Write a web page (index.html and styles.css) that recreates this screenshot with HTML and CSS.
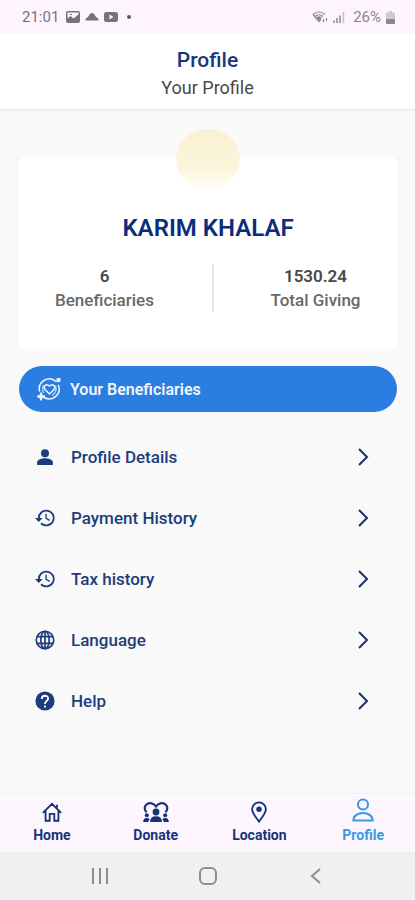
FILE: index.html
```html
<!DOCTYPE html>
<html lang="en">
<head>
    <meta charset="UTF-8">
    <meta name="viewport" content="width=device-width, initial-scale=1.0">
    <title>Profile</title>
    <link rel="stylesheet" href="styles.css">
</head>
<body>
    <div class="status-bar">
        <div class="status-group">
            <span>21:01</span>
            <svg width="14" height="12" viewBox="0 0 14 12"><path fill="currentColor" fill-rule="evenodd" d="M2 0h10a2 2 0 0 1 2 2v8a2 2 0 0 1-2 2H2a2 2 0 0 1-2-2V2a2 2 0 0 1 2-2zM1.500 1.500v6l3-2.500 3 2.500 5-4v-2zM4 3h2v1H4z"/></svg>
            <svg width="14" height="12" viewBox="0 0 14 12"><path fill="currentColor" d="M1.500 9.500C0 9.500 0 7 2.500 6.500L5 3Q7 1 9 3l2.500 3.500C14 7 14 9.500 12.500 9.500z"/></svg>
            <svg width="14" height="12" viewBox="0 0 14 12"><path fill="currentColor" fill-rule="evenodd" d="M2.500 1h9A2.500 2.500 0 0 1 14 3.500v5a2.500 2.500 0 0 1-2.500 2.500h-9A2.500 2.500 0 0 1 0 8.500v-5A2.500 2.500 0 0 1 2.500 1zM5.500 3.500v5L9.500 6z"/></svg>
            <span class="dot"></span>
        </div>
        <div class="status-group status-right">
            <svg width="16" height="12" viewBox="0 0 16 12" fill="none" stroke="currentColor" stroke-width="1.200"><path d="M1 3.500Q7 -1.500 13 3.500M3 5.500Q7 2 11 5.500M1 3.500l6 7 2-2"/><path fill="currentColor" d="M5 6.500Q7 5 9 6.500L7 9z"/><path d="M11.500 8v3M14.500 7v3"/></svg>
            <svg width="12" height="12" viewBox="0 0 12 12" fill="none" stroke="currentColor" stroke-width="1.500"><path d="M1 12V9.500M4 12V7M7 12V4.500"/><path opacity=".5" d="M10.500 12V1"/></svg>
            <span class="battery-text">26%</span>
            <svg width="9" height="13" viewBox="0 0 9 13" fill="currentColor"><path opacity=".4" d="M3 0h3v1.500h2q1 0 1 1V8H0V2.500q0-1 1-1h2z"/><path d="M0 8h9v4q0 1-1 1H1q-1 0-1-1z"/></svg>
        </div>
    </div>

    <header>
        <h1>Profile</h1>
        <p>Your Profile</p>
    </header>

    <main>
        <section class="card">
            <div class="avatar"></div>
            <h2>KARIM KHALAF</h2>
            <div class="stats">
                <div class="stat">
                    <strong>6</strong>
                    <span>Beneficiaries</span>
                </div>
                <div class="stat">
                    <strong>1530.24</strong>
                    <span>Total Giving</span>
                </div>
            </div>
        </section>

        <button type="button" class="beneficiaries">
            <svg width="24" height="24" viewBox="0 0 24 24" fill="none" stroke="currentColor" stroke-width="1.500" stroke-linecap="round" stroke-linejoin="round"><path d="M19 4.500A10 10 0 0 0 2.500 14M7 20.500a10 10 0 0 0 14.500-12"/><path d="M12.500 17l-4.500-4.500C5.500 9 9.500 6 12.500 9c3-3 7 0 4.500 3.500z"/><path d="M6.500 15.500A7 7 0 0 1 6 9M18.500 9a7 7 0 0 1-3 9" opacity=".6"/><path fill="currentColor" d="M4 16l1 2.500 2.500 1L5 20.500 4 23l-1-2.500-2.500-1 2.500-1z"/><circle cx="21.500" cy="3" r="1.500" fill="currentColor"/></svg>
            Your Beneficiaries
        </button>

        <nav class="menu">
            <a href="#details">
                <svg class="icon" viewBox="0 0 24 24" fill="currentColor"><circle cx="12" cy="7.500" r="4.800"/><path d="M2.500 21.500v-3c0-3.500 6-5 9.500-5s9.500 1.500 9.500 5v3z"/></svg>
                <span>Profile Details</span>
                <svg class="chevron" viewBox="0 0 12 20"><path d="M2 2l8 8-8 8"/></svg>
            </a>
            <a href="#payments">
                <svg class="icon" viewBox="0 0 24 24" fill="currentColor"><path d="M13.500 2A10 10 0 0 0 3.500 12H0l4.600 4.700L9.200 12H5.800a7.800 7.800 0 1 1 2.300 5.500l-1.600 1.600A10 10 0 1 0 13.500 2zM12.500 7v5.800l4.700 2.800.8-1.400-3.900-2.300V7z"/></svg>
                <span>Payment History</span>
                <svg class="chevron" viewBox="0 0 12 20"><path d="M2 2l8 8-8 8"/></svg>
            </a>
            <a href="#tax">
                <svg class="icon" viewBox="0 0 24 24" fill="currentColor"><path d="M13.500 2A10 10 0 0 0 3.500 12H0l4.600 4.700L9.200 12H5.800a7.800 7.800 0 1 1 2.300 5.500l-1.600 1.600A10 10 0 1 0 13.500 2zM12.500 7v5.800l4.700 2.800.8-1.400-3.900-2.300V7z"/></svg>
                <span>Tax history</span>
                <svg class="chevron" viewBox="0 0 12 20"><path d="M2 2l8 8-8 8"/></svg>
            </a>
            <a href="#language">
                <svg class="icon" viewBox="0 0 24 24" fill="none" stroke="currentColor" stroke-width="2"><circle cx="12" cy="12" r="10.500"/><ellipse cx="12" cy="12" rx="5" ry="10.500"/><path d="M2.500 8h19M2.500 16h19M12 1.500v21"/></svg>
                <span>Language</span>
                <svg class="chevron" viewBox="0 0 12 20"><path d="M2 2l8 8-8 8"/></svg>
            </a>
            <a href="#help">
                <svg class="icon" viewBox="0 0 24 24"><circle cx="12" cy="12" r="11.500" fill="currentColor"/><path fill="none" stroke="#fff" stroke-width="2.200" d="M8.200 9.500c0-5 7.600-5 7.600-.5 0 2.800-3.800 3-3.800 6.500M12 17.300v2.400"/></svg>
                <span>Help</span>
                <svg class="chevron" viewBox="0 0 12 20"><path d="M2 2l8 8-8 8"/></svg>
            </a>
        </nav>
    </main>

    <nav class="tabs">
        <a href="#home">
            <svg viewBox="0 0 24 24" fill="none" stroke="currentColor" stroke-width="2"><path d="M2 13L12 3l10 10M5 11v10.500h4.500V14h5v7.500H19V11M17.500 7V4"/></svg>
            Home
        </a>
        <a href="#donate">
            <svg class="wide" viewBox="0 0 28 24" fill="currentColor"><path fill="none" stroke="currentColor" stroke-width="2.400" d="M3.500 12.500C-1 6 4 1.500 9 2.500q3 .5 5 3.500 2-3 5-3.500c5-1 10 3.500 5.500 10"/><circle cx="14" cy="12" r="3.700"/><path d="M7.500 23q0-6.500 6.500-6.500t6.500 6.500z"/><circle cx="4" cy="15.500" r="2.200"/><circle cx="24" cy="15.500" r="2.200"/><path d="M0 23Q0 18.500 4 18.500q2 0 3 1L5.500 23zM28 23q0-4.500-4-4.500-2 0-3 1l1.500 3.500z"/></svg>
            Donate
        </a>
        <a href="#location">
            <svg viewBox="0 0 24 24" fill="none" stroke="currentColor" stroke-width="2"><path d="M12 22.500C9 18 4.500 13.500 4.500 9a7.500 7.500 0 0 1 15 0c0 4.500-4.500 9-7.500 13.500z"/><circle cx="12" cy="9" r="3" fill="currentColor" stroke="none"/></svg>
            Location
        </a>
        <a href="#profile" class="active">
            <svg viewBox="0 0 24 26" fill="none" stroke="currentColor" stroke-width="2.200"><circle cx="12" cy="7" r="5.500"/><path d="M1.500 24.500c0-11 21-11 21 0z"/></svg>
            Profile
        </a>
    </nav>

    <div class="system-bar">
        <button type="button" aria-label="Recent apps"><svg width="18" height="18" viewBox="0 0 18 18"><path d="M2 1v16M9 1v16M16 1v16"/></svg></button>
        <button type="button" aria-label="Home screen"><svg width="18" height="18" viewBox="0 0 18 18"><rect x="1" y="1" width="16" height="16" rx="5"/></svg></button>
        <button type="button" aria-label="Back"><svg width="18" height="18" viewBox="0 0 18 18"><path d="M13 2L5 9l8 7"/></svg></button>
    </div>
</body>
</html>
```
FILE: styles.css
```css
* {
    box-sizing: border-box;
}
body {
    font-family: Roboto, Arial, sans-serif;
    margin: 0;
    min-height: 100vh;
    display: flex;
    flex-direction: column;
    background-color: #f9f9f9;
    color: #484848;
}
h1, h2, p {
    margin: 0;
}
a {
    text-decoration: none;
}
button {
    border: none;
    font-family: inherit;
}
.status-bar {
    display: flex;
    justify-content: space-between;
    align-items: center;
    height: 34px;
    padding: 0 20px 0 22px;
    background-color: #fef4fe;
    color: #77727a;
    font-size: 15px;
}
.status-group {
    display: flex;
    align-items: center;
    gap: 5px;
}
.status-group span:first-child {
    margin-right: 2px;
}
.status-right {
    color: #8c878e;
}
.battery-text {
    margin-left: 3px;
}
.dot {
    width: 4px;
    height: 4px;
    margin-left: 4px;
    border-radius: 50%;
    background-color: #5c585e;
}
header {
    padding: 12px 0 7px;
    background-color: white;
    border-bottom: 2px solid #eee;
    text-align: center;
}
h1 {
    color: #17387f;
    font-size: 21px;
    font-weight: 500;
    line-height: 28px;
}
header p {
    font-size: 18px;
    line-height: 28px;
}
main {
    flex: 1;
    padding: 45px 18px 0 19px;
}
.card {
    display: flex;
    flex-direction: column;
    align-items: center;
    padding-bottom: 37px;
    background-color: white;
    border-radius: 8px;
}
.avatar {
    width: 64px;
    height: 60px;
    margin-top: -27px;
    border-radius: 50%;
    background: linear-gradient(#fbf2d4 20%, #fcf5dc 65%, #fffdf5);
}
h2 {
    margin-top: 23px;
    color: #0b2e7c;
    font-size: 24px;
    font-weight: 600;
    line-height: 32px;
}
.stats {
    display: grid;
    grid-template-columns: 1fr 1fr;
    width: 100%;
    margin-top: 20px;
    padding-left: 8px;
}
.stat {
    display: flex;
    flex-direction: column;
    align-items: center;
    padding-right: 30px;
    font-size: 17px;
    font-weight: 500;
    line-height: 24px;
}
.stat strong {
    font-weight: 600;
}
.stat span {
    color: #686868;
}
.stat + .stat {
    padding-left: 20px;
    padding-right: 0;
    border-left: 2px solid #e2e2e2;
}
.beneficiaries {
    display: flex;
    align-items: center;
    gap: 9px;
    width: 100%;
    height: 46px;
    margin-top: 17px;
    padding: 0 18px;
    border-radius: 23px;
    background-color: #2a7de1;
    color: #f0f6ff;
    font-size: 16px;
    font-weight: 600;
}
.menu {
    margin-top: 14px;
}
.menu a {
    display: flex;
    align-items: center;
    height: 61px;
    padding: 0 28px 0 16px;
    color: #1b3d7b;
    font-size: 17px;
    font-weight: 500;
}
.menu span {
    flex: 1;
    margin-left: 16px;
}
.icon {
    width: 20px;
    height: 20px;
}
.chevron {
    width: 12px;
    height: 20px;
    fill: none;
    stroke: #1b3268;
    stroke-width: 2;
}
.tabs {
    display: grid;
    grid-template-columns: repeat(4, 1fr);
    height: 59px;
    background-color: #fef6fe;
    border-top: 1px solid #f3edf3;
}
.tabs a {
    display: flex;
    flex-direction: column;
    align-items: center;
    justify-content: flex-end;
    gap: 2px;
    padding-bottom: 7px;
    color: #14347a;
    font-size: 14px;
    font-weight: 700;
    line-height: 20px;
}
.tabs svg {
    width: 22px;
    height: 22px;
}
.tabs .wide {
    width: 26px;
}
.tabs .active {
    color: #3a98e2;
}
.tabs .active svg {
    height: 26px;
}
.system-bar {
    display: flex;
    justify-content: center;
    align-items: center;
    gap: 90px;
    height: 48px;
    background-color: #f0f0f0;
}
.system-bar button {
    display: flex;
    padding: 0;
    background: none;
}
.system-bar svg {
    fill: none;
    stroke: #8d8d8d;
    stroke-width: 2;
}
```
